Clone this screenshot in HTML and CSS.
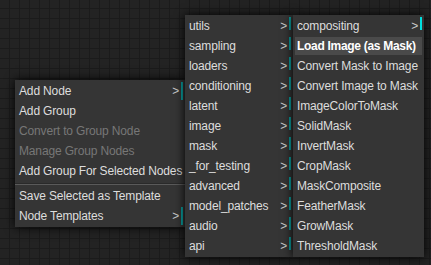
FILE: index.html
```html
<!DOCTYPE html>
<html lang="en">
<head>
  <meta charset="UTF-8">
  <title>Context Menu</title>
  <link rel="stylesheet" href="styles.css">
</head>
<body>
  <div class="canvas">

    <!-- Main context menu -->
    <div class="menu menu-main">
      <div class="entry has-sub"><span>Add Node</span><span class="arrow">&gt;</span></div>
      <div class="entry"><span>Add Group</span></div>
      <div class="entry disabled"><span>Convert to Group Node</span></div>
      <div class="entry disabled"><span>Manage Group Nodes</span></div>
      <div class="entry"><span>Add Group For Selected Nodes</span></div>
      <div class="separator"></div>
      <div class="entry"><span>Save Selected as Template</span></div>
      <div class="entry has-sub"><span>Node Templates</span><span class="arrow">&gt;</span></div>
    </div>

    <!-- Node categories -->
    <div class="menu menu-cats">
      <div class="entry has-sub short"><span>utils</span><span class="arrow">&gt;</span></div>
      <div class="entry has-sub short"><span>sampling</span><span class="arrow">&gt;</span></div>
      <div class="entry has-sub short"><span>loaders</span><span class="arrow">&gt;</span></div>
      <div class="entry has-sub short"><span>conditioning</span><span class="arrow">&gt;</span></div>
      <div class="entry has-sub short"><span>latent</span><span class="arrow">&gt;</span></div>
      <div class="entry has-sub short"><span>image</span><span class="arrow">&gt;</span></div>
      <div class="entry has-sub short"><span>mask</span><span class="arrow">&gt;</span></div>
      <div class="entry has-sub short"><span>_for_testing</span><span class="arrow">&gt;</span></div>
      <div class="entry has-sub short"><span>advanced</span><span class="arrow">&gt;</span></div>
      <div class="entry has-sub short"><span>model_patches</span><span class="arrow">&gt;</span></div>
      <div class="entry has-sub short"><span>audio</span><span class="arrow">&gt;</span></div>
      <div class="entry has-sub short"><span>api</span><span class="arrow">&gt;</span></div>
    </div>

    <!-- Mask nodes -->
    <div class="menu menu-mask">
      <div class="entry has-sub short bright"><span>compositing</span><span class="arrow">&gt;</span></div>
      <div class="entry active"><span>Load Image (as Mask)</span></div>
      <div class="entry"><span>Convert Mask to Image</span></div>
      <div class="entry"><span>Convert Image to Mask</span></div>
      <div class="entry"><span>ImageColorToMask</span></div>
      <div class="entry"><span>SolidMask</span></div>
      <div class="entry"><span>InvertMask</span></div>
      <div class="entry"><span>CropMask</span></div>
      <div class="entry"><span>MaskComposite</span></div>
      <div class="entry"><span>FeatherMask</span></div>
      <div class="entry"><span>GrowMask</span></div>
      <div class="entry"><span>ThresholdMask</span></div>
    </div>

  </div>
</body>
</html>
```

FILE: styles.css
```css
body {
  margin: 0;
  padding: 0;
  font-family: "Liberation Sans", Arial, sans-serif;
  background: #222;
  overflow: hidden;
}

.canvas {
  position: relative;
  width: 431px;
  height: 265px;
  background-color: #232323;
  background-image:
    linear-gradient(90deg, #1b1b1b 1px, transparent 1px),
    linear-gradient(0deg, #1b1b1b 1px, transparent 1px);
  background-size: 10px 10px;
  background-position: 9px 9px;
}

.menu {
  position: absolute;
  background: #353535;
  box-shadow: 0 0 10px black;
  padding: 0;
  overflow: hidden;
}

.menu-main {
  left: 15px;
  top: 80px;
  width: 170px;
}

.menu-cats {
  left: 185px;
  top: 15px;
  width: 108px;
}

.menu-mask {
  left: 293px;
  top: 15px;
  width: 131px;
}

.entry {
  position: relative;
  display: flex;
  justify-content: space-between;
  align-items: center;
  height: 18px;
  margin: 2px;
  padding: 0 0 0 2px;
  font-size: 12px;
  letter-spacing: -0.15px;
  color: #ddd;
  white-space: nowrap;
}

.entry.disabled {
  color: #777;
}

.entry.active {
  background: #4a4a4a;
  color: #fff;
  font-weight: bold;
  letter-spacing: -0.3px;
}

.arrow {
  flex-shrink: 0;
  padding-right: 4px;
  color: #ccc;
}

.has-sub::after {
  content: "";
  position: absolute;
  right: 0;
  top: 0;
  width: 2px;
  height: 18px;
  background: #0a9f9f;
}

.has-sub.short::after {
  height: 13px;
}

.has-sub.bright::after {
  background: #00dede;
}

.separator {
  margin: 3px 0 2px;
  border-top: 1px solid #2a2a2a;
  border-bottom: 1px solid #5a5a5a;
}
```
